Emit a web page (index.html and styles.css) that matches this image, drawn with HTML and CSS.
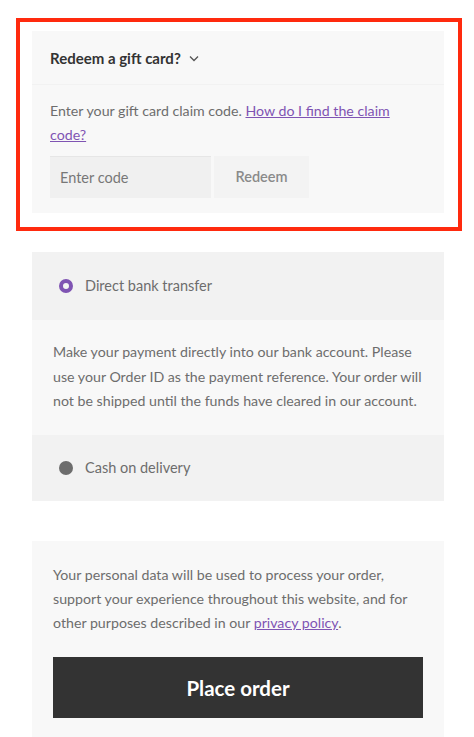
FILE: index.html
```html
<!DOCTYPE html>
<html lang="en">
<head>
<meta charset="utf-8">
<title>Checkout</title>
<link rel="stylesheet" href="styles.css">
</head>
<body>
<div class="highlight">
  <section class="gift">
    <div class="gift-head">
      <span class="gift-title">Redeem a gift card?</span>
      <svg class="chev" width="10" height="7" viewBox="0 0 10 7"><path d="M1 1.5 L5 5.5 L9 1.5" fill="none" stroke="#555" stroke-width="1.3"/></svg>
    </div>
    <div class="gift-body">
      <p class="gift-text">Enter your gift card claim code. <a href="#">How do I find the claim code?</a></p>
      <div class="gift-form">
        <div class="code-input">Enter code</div>
        <div class="redeem-btn">Redeem</div>
      </div>
    </div>
  </section>
</div>

<section class="payment">
  <div class="method first">
    <span class="radio checked"></span>
    <span class="method-label">Direct bank transfer</span>
  </div>
  <div class="method-desc">
    <p>Make your payment directly into our bank account. Please use your Order ID as the payment reference. Your order will not be shipped until the funds have cleared in our account.</p>
  </div>
  <div class="method">
    <span class="radio"></span>
    <span class="method-label">Cash on delivery</span>
  </div>
</section>

<section class="place">
  <p class="privacy">Your personal data will be used to process your order, support your experience throughout this website, and for other purposes described in our <a href="#">privacy policy</a>.</p>
  <div class="place-btn">Place order</div>
</section>
</body>
</html>
```
FILE: styles.css
```css
html, body {
  margin: 0;
  padding: 0;
  background: #ffffff;
}
body {
  font-family: Lato, "Open Sans", "Liberation Sans", sans-serif;
  color: #6d6d6d;
  font-size: 14.2px;
  line-height: 24px;
}
p { margin: 0; }
a { color: #7f54b3; text-decoration: underline; }

.highlight {
  margin: 18px 0 0 16px;
  width: 412px;
  border: 4px solid #ff2a0e;
  padding: 9px 14px 14px 12px;
}
.gift {
  background: #f8f8f8;
}
.gift-head {
  height: 54px;
  display: flex;
  align-items: center;
  gap: 8px;
  padding: 0 18px;
  border-bottom: 1px solid #f2f2f2;
  box-sizing: border-box;
}
.gift-title {
  font-weight: 700;
  color: #333333;
  font-size: 15px;
}
.chev { margin-top: 1px; }
.gift-body {
  padding: 14px 18px 15px;
}
.gift-form {
  display: flex;
  gap: 3px;
  margin-top: 9px;
}
.code-input {
  width: 161px;
  height: 42px;
  box-sizing: border-box;
  background: #f0f0f0;
  border-top: 1px solid #e6e6e6;
  padding-left: 10px;
  display: flex;
  align-items: center;
  color: #777;
  font-size: 14.5px;
}
.redeem-btn {
  width: 95px;
  height: 42px;
  background: #f3f3f3;
  display: flex;
  align-items: center;
  justify-content: center;
  color: #8a8a8a;
  font-weight: 600;
  font-size: 14.5px;
}

.payment {
  margin: 21px 0 0 32px;
  width: 412px;
}
.method {
  height: 66px;
  background: #f2f2f2;
  display: flex;
  align-items: center;
  gap: 12px;
  padding-left: 27px;
}
.method.first { height: 68px; }
.method-label { color: #6d6d6d; font-size: 14.5px; }
.radio {
  width: 14px;
  height: 14px;
  border-radius: 50%;
  background: #6d6d6d;
  box-sizing: border-box;
}
.radio.checked {
  background: #f4f4f4;
  border: 4px solid #7f54b3;
}
.method-desc {
  background: #f8f8f8;
  padding: 20px 21px 21px 21px;
  height: 115px;
  box-sizing: border-box;
  line-height: 24.5px;
}

.place {
  margin: 40px 0 0 32px;
  width: 412px;
  background: #f8f8f8;
  padding: 22px 21px 20px;
  box-sizing: border-box;
}
.place-btn {
  margin-top: 22px;
  height: 61px;
  background: #333333;
  color: #ffffff;
  font-size: 20.5px;
  font-weight: 700;
  display: flex;
  align-items: center;
  justify-content: center;
}
```
